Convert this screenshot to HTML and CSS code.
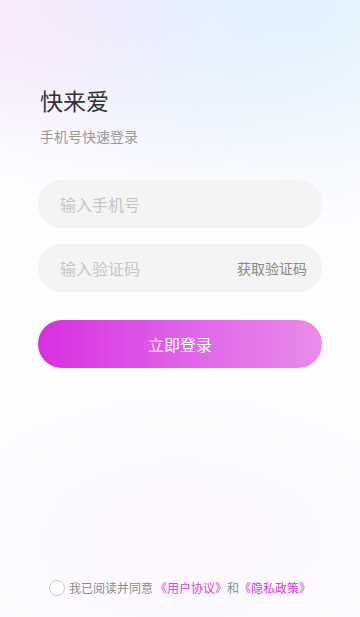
FILE: index.html
```html
<!DOCTYPE html>
<html lang="zh">
<head>
<meta charset="utf-8">
<meta name="viewport" content="width=device-width, initial-scale=1">
<link rel="stylesheet" href="styles.css">
</head>
<body>
<div class="page">
  <div class="head">
    <h1 class="title">快来爱</h1>
    <p class="subtitle">手机号快速登录</p>
  </div>
  <div class="form">
    <div class="field"><span class="ph">输入手机号</span></div>
    <div class="field"><span class="ph">输入验证码</span><span class="code">获取验证码</span></div>
    <div class="btn">立即登录</div>
  </div>
  <div class="spacer"></div>
  <div class="agree">
    <span class="check"></span>
    <span class="txt">我已阅读并同意</span>
    <span class="link first">《用户协议》</span><span class="txt">和</span><span class="link">《隐私政策》</span>
  </div>
</div>
</body>
</html>
```
FILE: styles.css
```css
html, body {
  margin: 0;
  padding: 0;
}
body {
  font-family: "Noto Sans CJK SC", "Noto Sans", sans-serif;
  background: #fdfcff;
}
.page {
  width: 360px;
  height: 617px;
  box-sizing: border-box;
  display: flex;
  flex-direction: column;
  background:
    radial-gradient(ellipse 200px 130px at 0px 20px, rgba(250, 228, 249, 0.7), rgba(250, 228, 249, 0) 100%),
    radial-gradient(ellipse 300px 220px at 300px 0px, rgba(222, 241, 253, 0.95), rgba(222, 241, 253, 0) 100%),
    radial-gradient(ellipse 260px 190px at 120px 0px, rgba(234, 232, 253, 0.85), rgba(234, 232, 253, 0) 100%),
    radial-gradient(ellipse 240px 140px at 180px 540px, rgba(252, 244, 252, 0.6), rgba(252, 244, 252, 0) 100%),
    #fdfcff;
}
.head {
  padding: 83px 0 0 40px;
}
.title {
  margin: 0;
  font-size: 23px;
  font-weight: 400;
  line-height: 34px;
  color: #333333;
}
.subtitle {
  margin: 9px 0 0;
  font-size: 14px;
  line-height: 20px;
  color: #999999;
}
.form {
  display: flex;
  flex-direction: column;
  gap: 16px;
  padding: 34px 38px 0 38px;
}
.field {
  height: 48px;
  border-radius: 24px;
  background: #f4f4f4;
  display: flex;
  align-items: center;
  justify-content: space-between;
  padding: 0 15px 0 22px;
}
.ph {
  font-size: 16px;
  color: #c6c6c6;
}
.code {
  font-size: 14px;
  color: #888888;
}
.btn {
  margin-top: 12px;
  height: 48px;
  border-radius: 24px;
  background: linear-gradient(90deg, #d82fe1 0%, #e066e8 55%, #e98cec 100%);
  color: #ffffff;
  font-size: 16px;
  display: flex;
  align-items: center;
  justify-content: center;
}
.spacer {
  flex: 1;
}
.agree {
  display: flex;
  align-items: center;
  justify-content: center;
  padding-bottom: 21px;
  font-size: 12px;
  line-height: 16px;
}
.check {
  width: 14px;
  height: 14px;
  border: 1px solid #c9c6f2;
  border-radius: 50%;
  margin-right: 4px;
  background: #ffffff;
}
.txt {
  color: #8a8a8a;
}
.link {
  color: #d63fdd;
}
.link.first {
  margin-left: 2px;
}
```
